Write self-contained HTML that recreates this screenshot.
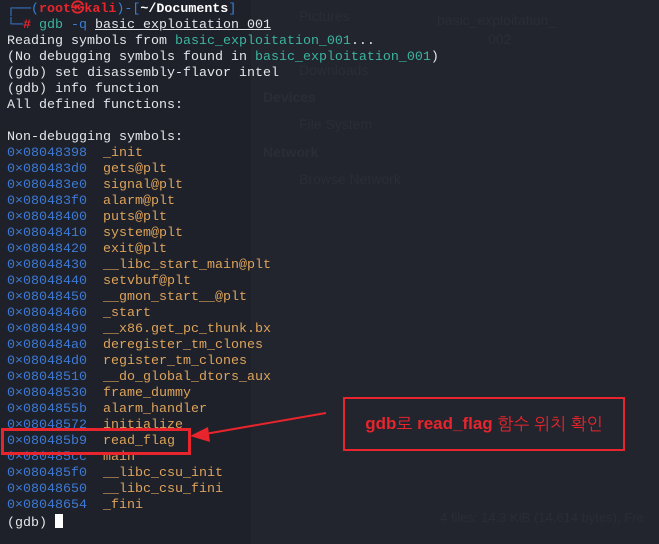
<!DOCTYPE html>
<html><head><meta charset="utf-8"><style>
html,body{margin:0;padding:0;}
body{width:659px;height:544px;background:#1e2129;position:relative;overflow:hidden;font-family:"Liberation Mono",monospace;}
.panel{position:absolute;left:251px;top:0;width:408px;height:544px;background:#22252e;}
.ghost{position:absolute;color:#292d36;font-family:"Liberation Sans",sans-serif;font-size:13px;white-space:nowrap;}
.term{position:absolute;left:7px;top:2px;font-size:13.33px;line-height:16px;color:#e4e6ea;white-space:pre;}
.b{color:#3d7ad6}.o{color:#dda35b}.t{color:#3db39f}.r{color:#e8242c;font-weight:bold}.bl{color:#3a7fd5}
.w{color:#fff;font-weight:bold}.u{text-decoration:underline}
.box{position:absolute;border:2px solid #e8242c;}
.note{position:absolute;left:343px;top:397px;width:278px;height:50px;border:2px solid #e8242c;color:#e8242c;font-family:"Liberation Sans","NanumGothic",sans-serif;font-size:17px;display:flex;align-items:center;justify-content:center;}
.cur{display:inline-block;width:8px;height:14px;background:#fff;vertical-align:-2px;}
</style></head><body>
<div class="panel"></div>
<div class="ghost" style="left:299px;top:8px;font-size:14px">Pictures</div>
<div class="ghost" style="left:299px;top:62px;font-size:14px">Downloads</div>
<div class="ghost" style="left:263px;top:89px;font-size:14px;font-weight:bold">Devices</div>
<div class="ghost" style="left:299px;top:116px;font-size:14px">File System</div>
<div class="ghost" style="left:263px;top:144px;font-size:14px;font-weight:bold">Network</div>
<div class="ghost" style="left:299px;top:171px;font-size:14px">Browse Network</div>
<div class="ghost" style="left:437px;top:12px;font-size:14px">basic_exploitation_</div>
<div class="ghost" style="left:488px;top:31px;font-size:14px">002</div>
<div class="ghost" style="left:440px;top:510px;font-size:13px">4 files: 14.3 KiB (14,614 bytes), Fre</div>
<div class="term"><span class="bl">┌──(</span><span class="r">root㉿kali</span><span class="bl">)-[</span><span class="w">~/Documents</span><span class="bl">]</span>
<span class="bl">└─</span><span class="r">#</span> <span class="t">gdb</span> <span class="bl">-q</span> <span class="u">basic_exploitation_001</span>
Reading symbols from <span class="t">basic_exploitation_001</span>...
(No debugging symbols found in <span class="t">basic_exploitation_001</span>)
(gdb) set disassembly-flavor intel
(gdb) info function
All defined functions:

Non-debugging symbols:
<span class="b">0×08048398</span>  <span class="o">_init</span>
<span class="b">0×080483d0</span>  <span class="o">gets@plt</span>
<span class="b">0×080483e0</span>  <span class="o">signal@plt</span>
<span class="b">0×080483f0</span>  <span class="o">alarm@plt</span>
<span class="b">0×08048400</span>  <span class="o">puts@plt</span>
<span class="b">0×08048410</span>  <span class="o">system@plt</span>
<span class="b">0×08048420</span>  <span class="o">exit@plt</span>
<span class="b">0×08048430</span>  <span class="o">__libc_start_main@plt</span>
<span class="b">0×08048440</span>  <span class="o">setvbuf@plt</span>
<span class="b">0×08048450</span>  <span class="o">__gmon_start__@plt</span>
<span class="b">0×08048460</span>  <span class="o">_start</span>
<span class="b">0×08048490</span>  <span class="o">__x86.get_pc_thunk.bx</span>
<span class="b">0×080484a0</span>  <span class="o">deregister_tm_clones</span>
<span class="b">0×080484d0</span>  <span class="o">register_tm_clones</span>
<span class="b">0×08048510</span>  <span class="o">__do_global_dtors_aux</span>
<span class="b">0×08048530</span>  <span class="o">frame_dummy</span>
<span class="b">0×0804855b</span>  <span class="o">alarm_handler</span>
<span class="b">0×08048572</span>  <span class="o">initialize</span>
<span class="b">0×080485b9</span>  <span class="o">read_flag</span>
<span class="b">0×080485cc</span>  <span class="o">main</span>
<span class="b">0×080485f0</span>  <span class="o">__libc_csu_init</span>
<span class="b">0×08048650</span>  <span class="o">__libc_csu_fini</span>
<span class="b">0×08048654</span>  <span class="o">_fini</span>
(gdb) <span class="cur"></span></div>
<div class="box" style="left:1px;top:428px;width:184px;height:21px;border-width:3px"></div>
<svg style="position:absolute;left:0;top:0" width="659" height="544">
<line x1="326" y1="413" x2="205" y2="434" stroke="#e8242c" stroke-width="2"/>
<polygon points="190,436 208,427 210,442" fill="#e8242c"/>
</svg>
<div class="note"><b>gdb</b>로&nbsp;<b>read_flag</b>&nbsp;함수 위치 확인</div>
</body></html>
